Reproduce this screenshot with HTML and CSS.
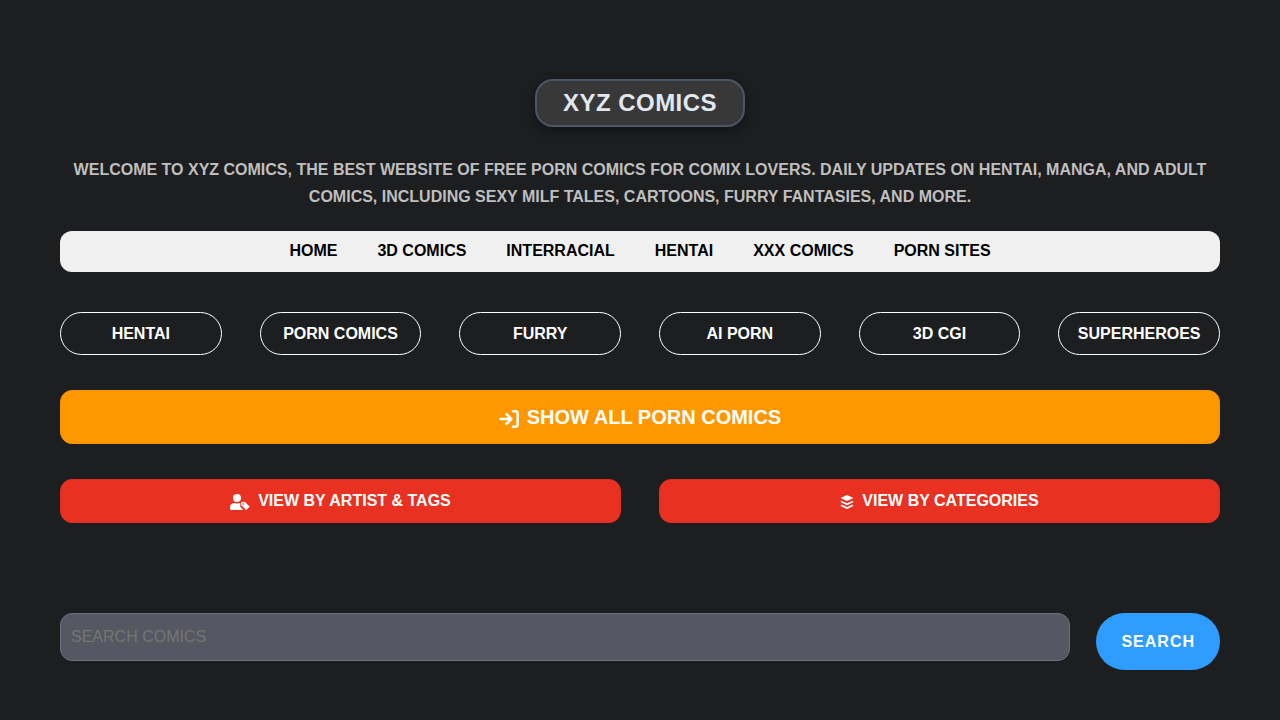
FILE: index.html
```html
<!DOCTYPE html>
<html lang="en">
<head>
    <title>XYZ Comics</title>
    <meta charset="UTF-8">
    <meta name="viewport" content="width=device-width, initial-scale=1.0">
    <link rel="stylesheet" href="styles.css">
</head>
<body>
    <div class="container">
        <header class="header">
            <h1 class="logo"><a href="#">XYZ COMICS</a></h1>
            <p class="intro">WELCOME TO XYZ COMICS, THE BEST WEBSITE OF FREE PORN COMICS FOR COMIX LOVERS. DAILY UPDATES ON HENTAI, MANGA, AND ADULT COMICS, INCLUDING SEXY MILF TALES, CARTOONS, FURRY FANTASIES, AND MORE.</p>
        </header>

        <nav class="menu">
            <a href="#">HOME</a>
            <a href="#">3D COMICS</a>
            <a href="#">INTERRACIAL</a>
            <a href="#">HENTAI</a>
            <a href="#">XXX COMICS</a>
            <a href="#">PORN SITES</a>
        </nav>

        <div class="tags">
            <a href="#">HENTAI</a>
            <a href="#">PORN COMICS</a>
            <a href="#">FURRY</a>
            <a href="#">AI PORN</a>
            <a href="#">3D CGI</a>
            <a href="#">SUPERHEROES</a>
        </div>

        <a class="btn btn-all" href="#">
            <svg class="icon icon-enter" viewBox="0 0 20 18" aria-hidden="true">
                <path d="M1.300 9h11M7.500 4.200 12.300 9l-4.800 4.800M14 1.300h2.200a2.500 2.500 0 0 1 2.500 2.500v10.400a2.500 2.500 0 0 1-2.500 2.500H14" fill="none" stroke="currentColor" stroke-width="2.600" stroke-linecap="round" stroke-linejoin="round"/>
            </svg>
            SHOW ALL PORN COMICS
        </a>

        <div class="views">
            <a class="btn btn-view" href="#">
                <svg class="icon icon-artist" viewBox="0 0 640 512" aria-hidden="true">
                    <path fill="currentColor" d="M224 256a128 128 0 1 0 0-256 128 128 0 0 0 0 256zm-90 32C60 288 0 348 0 422v42c0 26 22 48 48 48h352c8 0 16-2 23-6l-75-75c-13-13-20-30-20-48v-91c0-1 0-2 1-3-5 0-10-1-15-1h-17a174 174 0 0 1-146 0z"/>
                    <path fill="currentColor" fill-rule="evenodd" stroke="currentColor" stroke-width="16" stroke-linejoin="round" d="M368 264h112l144 140-104 100-152-144zM424 352a32 32 0 1 0 0-64 32 32 0 0 0 0 64z"/>
                </svg>
                VIEW BY ARTIST &amp; TAGS
            </a>
            <a class="btn btn-view" href="#">
                <svg class="icon icon-layers" viewBox="0 0 14 14" aria-hidden="true">
                    <path fill="currentColor" d="M7 0 13.500 3 7 6 .5 3z"/>
                    <path d="m1 6.500 6 2.800 6-2.800M1 10.200 7 13l6-2.800" fill="none" stroke="currentColor" stroke-width="1.700"/>
                </svg>
                VIEW BY CATEGORIES
            </a>
        </div>

        <form class="search">
            <input type="search" name="q" placeholder="SEARCH COMICS" aria-label="Search comics">
            <button type="submit">SEARCH</button>
        </form>
    </div>
</body>
</html>
```
FILE: styles.css
```css
* {
    box-sizing: border-box;
    margin: 0;
    padding: 0;
}

body {
    font-family: "Liberation Sans", Arial, sans-serif;
    font-size: 16px;
    background: #1d1e20;
    color: #fff;
}

a {
    color: inherit;
    text-decoration: none;
}

.container {
    padding: 79px 60px 50px;
}

.header {
    text-align: center;
}

.logo {
    display: inline-block;
    padding: 8px 26px;
    font-size: 24px;
    line-height: 28px;
    letter-spacing: 0.02em;
    color: #e2e8f0;
    background: #383838;
    border: 2px solid #4a5568;
    border-radius: 18px;
    box-shadow: 0 4px 12px rgba(0, 0, 0, 0.4);
}

.intro {
    margin-top: 29px;
    font-weight: bold;
    line-height: 27px;
    color: #bfbfbf;
}

.menu {
    display: flex;
    flex-wrap: wrap;
    justify-content: center;
    gap: 0 40px;
    margin-top: 21px;
    padding: 9px 10px 11px;
    font-weight: bold;
    line-height: 21px;
    color: #000;
    background: #f0f0f0;
    border-radius: 12px;
}

.tags {
    display: grid;
    grid-template-columns: repeat(6, 1fr);
    gap: 38px;
    margin-top: 40px;
}

.tags a {
    padding: 10px 0;
    font-weight: bold;
    line-height: 21px;
    text-align: center;
    border: 1px solid #fff;
    border-radius: 22px;
}

.btn {
    display: flex;
    align-items: center;
    justify-content: center;
    font-weight: bold;
    border-radius: 12px;
}

.btn-all {
    gap: 8px;
    margin-top: 35px;
    padding: 11px;
    font-size: 20px;
    line-height: 30px;
    background: #ff9800;
    border: 1px solid #f59200;
}

.views {
    display: grid;
    grid-template-columns: 1fr 1fr;
    gap: 38px;
    margin-top: 35px;
}

.btn-view {
    gap: 8px;
    padding: 9px;
    line-height: 24px;
    background: #e83121;
    border: 1px solid #de2f20;
}

.icon {
    flex: none;
    margin-top: 2px;
    overflow: visible;
}

.icon-enter {
    width: 20px;
    height: 18px;
    margin-top: 4px;
}

.icon-artist {
    width: 20px;
    height: 16px;
}

.icon-layers {
    width: 14px;
    height: 14px;
}

.search {
    display: flex;
    align-items: flex-start;
    gap: 26px;
    margin-top: 90px;
}

.search input {
    flex: 1;
    min-width: 0;
    height: 48px;
    padding: 0 10px;
    font: inherit;
    color: #fff;
    background: #555762;
    border: 1px solid #6b6f7b;
    border-radius: 12px;
    appearance: none;
}

.search input::placeholder {
    color: #757575;
}

.search button {
    padding: 18px 25px;
    font: inherit;
    font-weight: bold;
    line-height: 21px;
    letter-spacing: 1px;
    color: #fff;
    background: #2e9dff;
    border: none;
    border-radius: 30px;
    cursor: pointer;
}

@media (max-width: 800px) {
    .container {
        padding: 30px 20px;
    }

    .tags {
        grid-template-columns: repeat(2, 1fr);
        gap: 16px;
    }

    .views {
        grid-template-columns: 1fr;
        gap: 16px;
    }
}
```
